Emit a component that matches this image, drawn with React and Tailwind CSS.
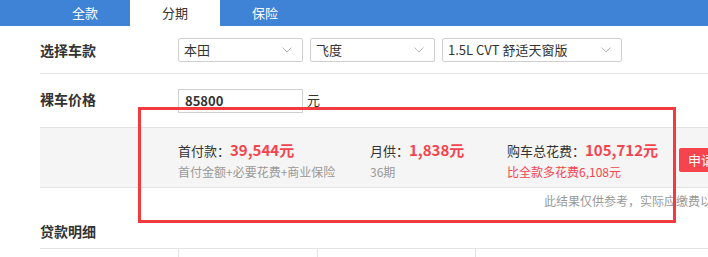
import React from "react";

const font = { fontFamily: '"Microsoft YaHei", "Noto Sans CJK SC", "Liberation Sans", sans-serif' };

function Chevron() {
  return (
    <svg width="12" height="8" viewBox="0 0 12 8" className="shrink-0">
      <path d="M1.5 1.5 L6 6 L10.5 1.5" fill="none" stroke="#b8b8b8" strokeWidth="1" />
    </svg>
  );
}

function Select({ text, w }) {
  return (
    <div className={`${w} h-[24px] border border-[#cfcfcf] rounded-[2px] flex items-center justify-between pl-[5px] pr-[9px] text-[13px] text-[#333]`}>
      <span>{text}</span>
      <Chevron />
    </div>
  );
}

export default function App() {
  return (
    <div className="relative w-[708px] h-[257px] overflow-hidden bg-white" style={font}>
      {/* tabs */}
      <div className="h-[26px] bg-[#3f83d6] flex pl-[40px] text-[13px]">
        <div className="w-[90px] flex items-center justify-center text-white">全款</div>
        <div className="w-[90px] flex items-center justify-center bg-white text-[#333]">分期</div>
        <div className="w-[90px] flex items-center justify-center text-white">保险</div>
      </div>

      <div className="pl-[40px] w-[900px]">
        {/* row 1 */}
        <div className="h-[48px] border-b border-[#e3e3e3] flex pt-[12px]">
          <div className="w-[138px] text-[14px] font-bold text-[#333] leading-[24px]">选择车款</div>
          <div className="flex gap-[7px]">
            <Select text="本田" w="w-[125px]" />
            <Select text="飞度" w="w-[125px]" />
            <Select text="1.5L CVT 舒适天窗版" w="w-[180px]" />
          </div>
        </div>

        {/* row 2 */}
        <div className="h-[53px] flex pt-[15px]">
          <div className="w-[138px] text-[14px] font-bold text-[#333] leading-[20px]">裸车价格</div>
          <div className="w-[125px] h-[24px] border border-[#cfcfcf] flex items-center pl-[6px] text-[13px] font-bold text-[#333]">85800</div>
          <div className="ml-[4px] text-[13px] text-[#333] leading-[22px] h-[24px]">元</div>
        </div>

        {/* summary band */}
        <div className="h-[61px] bg-[#f5f5f5] border-t border-b border-[#e3e3e3] flex pl-[138px] pt-[11px]">
          <div className="w-[192px]">
            <div className="text-[13px] text-[#333] leading-[22px]">
              首付款：<span className="text-[15px] font-bold text-[#f5444e]">39,544元</span>
            </div>
            <div className="text-[12px] text-[#999] leading-[20px]">首付金额+必要花费+商业保险</div>
          </div>
          <div className="w-[137px]">
            <div className="text-[13px] text-[#333] leading-[22px]">
              月供：<span className="text-[15px] font-bold text-[#f5444e]">1,838元</span>
            </div>
            <div className="text-[12px] text-[#999] leading-[20px]">36期</div>
          </div>
          <div className="w-[172px]">
            <div className="text-[13px] text-[#333] leading-[22px]">
              购车总花费：<span className="text-[15px] font-bold text-[#f5444e]">105,712元</span>
            </div>
            <div className="text-[12px] text-[#f5444e] leading-[20px]">比全款多花费6,108元</div>
          </div>
          <div className="mt-[9px] h-[24px] w-[80px] rounded-[2px] bg-[#f5444e] text-white text-[13px] flex items-center pl-[9px]">申请贷款</div>
        </div>

        {/* note */}
        <div className="h-[26px] pl-[504px] text-[12px] text-[#999] leading-[26px] whitespace-nowrap">此结果仅供参考，实际应缴费以4S店为准</div>

        {/* loan details */}
        <div className="h-[34px] text-[14px] font-bold text-[#333] leading-[34px]">贷款明细</div>
        <div className="border-t border-[#e3e3e3] h-[20px] flex">
          <div className="w-[138px] h-full" />
          <div className="w-[139px] h-full border-l border-[#e3e3e3]" />
          <div className="w-[158px] h-full border-l border-[#e3e3e3]" />
          <div className="flex-1 h-full border-l border-[#e3e3e3]" />
        </div>
      </div>

      {/* red highlight box */}
      <div className="absolute left-[138px] top-[107px] w-[538px] h-[116px] border-[3px] border-[#f23a3f] pointer-events-none" />
    </div>
  );
}
